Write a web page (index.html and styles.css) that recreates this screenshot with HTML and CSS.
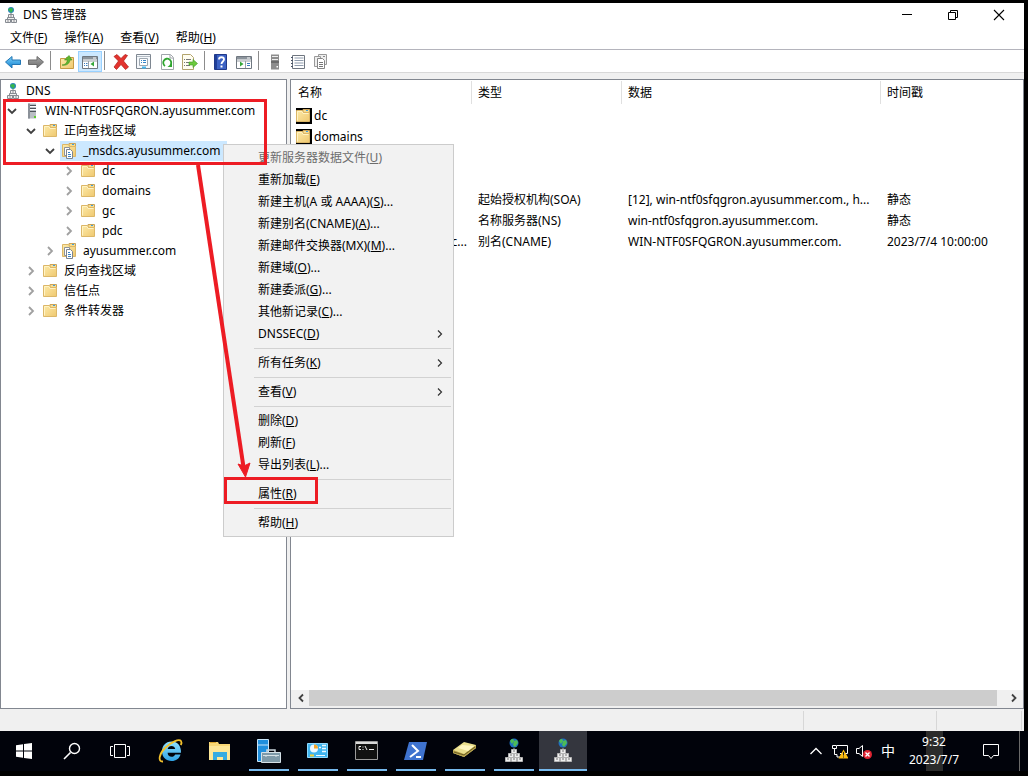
FILE: index.html
```html
<!DOCTYPE html>
<html lang="zh-CN">
<head>
<meta charset="utf-8">
<title>DNS 管理器</title>
<link rel="stylesheet" href="styles.css">
</head>
<body>
<svg class="sprite" aria-hidden="true">
  <defs>
    <linearGradient id="gold" x1="0" y1="0" x2="1" y2="1"><stop offset="0" stop-color="#fdeba9"/><stop offset="1" stop-color="#efc870"/></linearGradient>
    <linearGradient id="blue" x1="0" y1="0" x2="0" y2="1"><stop offset="0" stop-color="#7fd3fa"/><stop offset="1" stop-color="#0f7fd0"/></linearGradient>
    <linearGradient id="grey" x1="0" y1="0" x2="0" y2="1"><stop offset="0" stop-color="#a8a8a8"/><stop offset="1" stop-color="#6c6c6c"/></linearGradient>
    <linearGradient id="ie" x1="0" y1="0" x2="0" y2="1"><stop offset="0" stop-color="#8fe0ff"/><stop offset="1" stop-color="#2fa3e6"/></linearGradient>
  </defs>
  <symbol id="i-dns" viewBox="0 0 16 16">
    <circle cx="8" cy="3" r="3" fill="#2a86b8"/><path d="M6 1.500 9 1l1 2-2 3-1-2-2-1z" fill="#37b84a"/>
    <path d="M8 6v2M3.500 13v-1M12.500 13v-1" stroke="#777"/>
    <path d="M5.500 7.500h5v3h-5zM4.500 10.500h7v2h-7zM2.500 12.500h5v3h-5zM8.500 12.500h5v3h-5z" fill="#eee" stroke="#868b92"/>
    <path d="M7 9h2M4 14h2M10 14h2" stroke="#8d8d92"/>
  </symbol>
  <symbol id="i-folder" viewBox="1 0 16 16">
    <path d="M8 1.500h6.500v3H8z" fill="#f9dc8e" stroke="#cba45a"/><path d="M11 2.500h2" stroke="#3c9fe0"/>
    <path d="M1.500 2.500h6l1 2h6v9h-13z" fill="url(#gold)" stroke="#dcb768"/>
    <path d="M2.500 12.500V3.500h4.500l1 2h5.500" fill="none" stroke="#fff3c4"/>
  </symbol>
  <symbol id="i-zone" viewBox="1 0 16 16">
    <path d="M8 .500h6.500v3H8z" fill="#f9dc8e" stroke="#cba45a"/><path d="M11 1.500h2" stroke="#3c9fe0"/>
    <path d="M1.500 1.500h6l1 2h6v10h-13z" fill="url(#gold)" stroke="#dcb768"/>
    <path d="M3.500 4.500h5v8h-5z" fill="#fff" stroke="#8b929b"/>
    <path d="M5.500 6.500h4l2 2v7h-6z" fill="#fff" stroke="#7c848e"/>
    <path d="M7 9.500h2M7 11.500h3M7 13.500h3" stroke="#3a83c6"/>
  </symbol>
  <symbol id="i-server" viewBox="0 0 16 16">
    <path d="M4 .500h8v15H4z" fill="#b9bec4"/><path d="M4 .500h2v15H4z" fill="#8b9199"/>
    <path d="M6 2.500h6M6 5.500h6M6 8.500h6" stroke="#4e545b"/><path d="M6 3.500h6M6 6.500h6" stroke="#fff"/>
    <path d="M10 13h2v2h-2z" fill="#5acb2e"/>
  </symbol>
  <symbol id="i-open" viewBox="0 0 10 10"><path d="m1 3 4 4 4-4" fill="none" stroke="#404040" stroke-width="1.800"/></symbol>
  <symbol id="i-closed" viewBox="0 0 10 10"><path d="m3 1 4 4-4 4" fill="none" stroke="#a0a0a0" stroke-width="1.800"/></symbol>
  <symbol id="i-more" viewBox="0 0 10 10"><path d="m3 1.500 3.500 3.500L3 8.500" fill="none" stroke="#333" stroke-width="1.200"/></symbol>
  <symbol id="i-back" viewBox="0 0 16 16"><path d="M.500 8 7 2.500v3.500h8.500v4.500H7V14z" fill="url(#blue)" stroke="#2377b4"/></symbol>
  <symbol id="i-forward" viewBox="0 0 16 16"><path d="M15.500 8 9 2.500v3.500H.500v4.500H9V14z" fill="url(#grey)" stroke="#6b6b6b"/></symbol>
  <symbol id="i-up" viewBox="0 0 16 16">
    <path d="M1.500 4.500h5l1-1h7v11h-13z" fill="url(#gold)" stroke="#c79b45"/>
    <path d="M3 11c3 0 5-2 5.500-5H5.500L10 1.500 13 6h-2C10.500 9.500 7.500 12 3 11z" fill="#5fb62e" stroke="#3f8f1e" stroke-width=".600"/>
  </symbol>
  <symbol id="i-treepane" viewBox="0 0 16 16">
    <path d="M.500 2.500h15v12H.500z" fill="#fff" stroke="#6f7780"/><path d="M1 3h14v2.500H1z" fill="#8c949c"/><path d="M11 4h3" stroke="#fff"/><path d="M1 7h14M6.500 7v7" stroke="#9aa1a8"/>
    <path d="M2 9.500h1M2 11.500h1M4 9.500h1.500M4 11.500h1.500" stroke="#3a7dbd"/><path d="M12 7.500v5L8.500 10z" fill="#36a83a"/>
  </symbol>
  <symbol id="i-actionpane" viewBox="0 0 16 16">
    <path d="M.500 2.500h15v12H.500z" fill="#fff" stroke="#6f7780"/><path d="M1 3h14v2.500H1z" fill="#8c949c"/><path d="M11 4h3" stroke="#fff"/><path d="M1 7h14M9.500 7v7" stroke="#9aa1a8"/>
    <path d="M11 9.500h3M11 11.500h3" stroke="#3a7dbd"/><path d="M4 7.500v5L7.500 10z" fill="#36a83a"/>
  </symbol>
  <symbol id="i-delete" viewBox="0 0 16 16"><path d="m1 2.500 3-2 4 4 4-4 2.500 1-4 5.500 5 6-3 2.500-4.500-5-4.500 5L1 13l4.500-6z" fill="#e3342f" stroke="#b01813" stroke-width=".700"/></symbol>
  <symbol id="i-props" viewBox="0 0 16 16">
    <path d="M.500.500h14v14H.500z" fill="#f5f8fb" stroke="#7e8791"/><path d="M1 2.500h13" stroke="#b4bcc4"/><path d="M3.500 4.500h8v7h-8z" fill="#fff" stroke="#9da7b0"/>
    <path d="M5 6.500h1M5 8.500h1M7 6.500h3M7 8.500h3" stroke="#3584c7"/><path d="M6 12.500h4v2H6z" fill="#42b5ee"/>
  </symbol>
  <symbol id="i-refresh" viewBox="0 0 16 16">
    <path d="M2.500.500h9l3 3v12h-12z" fill="#fff" stroke="#a0a5aa"/><path d="M11 1v3h3" fill="none" stroke="#a0a5aa"/>
    <path d="M6 12a4 4 0 1 1 5.500-1" fill="none" stroke="#2fa52f" stroke-width="1.800"/><path d="M13 9v4H8.500z" fill="#2fa52f"/>
  </symbol>
  <symbol id="i-export" viewBox="0 0 16 16">
    <path d="M.500.500h8l3 3v12H.500z" fill="#fffdf0" stroke="#b3a46d"/><path d="M2 5.500h1M2 8.500h1M2 11.500h1M4 5.500h5M4 8.500h4M4 11.500h4" stroke="#777"/>
    <path d="M7 8h4V5.500L15.500 9.500 11 13.500V11H7z" fill="#6cc93c" stroke="#3f9a25" stroke-width=".600"/>
  </symbol>
  <symbol id="i-help" viewBox="0 0 16 16">
    <path d="M1.500.500h12v15h-12z" fill="#3c62c4" stroke="#20398a"/><path d="M2 1h2v14H2z" fill="#203f98"/>
    <path d="M6 5.500c0-3 5-3 5 0 0 2-2.500 2-2.500 4.500" fill="none" stroke="#fff" stroke-width="1.800"/><path d="M7.500 11.500h2v2h-2z" fill="#fff"/>
  </symbol>
  <symbol id="i-host" viewBox="0 0 16 16"><path d="M4 .500h8v15H4z" fill="#8d8d8d"/><path d="M5 2.500h6M5 5.500h6" stroke="#eee"/><path d="M4 7.500h8v1H4z" fill="#4b4b4b"/><path d="M9.500 12h1.500v1.500H9.500z" fill="#fff"/></symbol>
  <symbol id="i-list" viewBox="0 0 16 16"><path d="M2.500 1.500h12v13h-12z" fill="#fff" stroke="#6f7680"/><path d="M4.500 4h9M4.500 6.500h9M4.500 9h9M4.500 11.500h9" stroke="#8f9cad"/><path d="M1 3.500h2M1 6.500h2M1 9.500h2M1 12.500h2" stroke="#4b5668"/></symbol>
  <symbol id="i-copies" viewBox="0 0 16 16"><path d="M5.500.500h8v10h-8z" fill="#eee" stroke="#999"/><path d="M10 2.500h2" stroke="#888"/><path d="M1.500 2.500h6v10h-6z" fill="#eee" stroke="#999"/><path d="M4.500 4.500h5l2 2v8h-7z" fill="#fff" stroke="#858585"/><path d="M6 8.500h4M6 10.500h4M6 12.500h4" stroke="#777"/></symbol>
  <symbol id="i-dnsbig" viewBox="0 0 24 28">
    <circle cx="12" cy="6" r="4.500" fill="#1f6fc0"/><path d="M8 4c2-3 4-2 4 0l-2 3zM12 4l3-1 1 3-3 4-2-2z" fill="#4dbb57"/>
    <path d="M12 11v2" stroke="#aaa"/>
    <path d="M9.500 12.500h5v4h-5zM6.500 16.500h5v4h-5zM12.500 16.500h5v4h-5zM3.500 20.500h5v4h-5zM9.500 20.500h5v4h-5zM15.500 20.500h5v4h-5z" fill="#eee" stroke="#b4b4b4"/>
    <path d="M11 14h2M8 18h2M14 18h2M5 22h2M11 22h2M17 22h2" stroke="#777"/>
  </symbol>
</svg>

<div class="window">
  <header class="titlebar">
    <svg class="icon"><use href="#i-dns"/></svg>
    <h1 class="title">DNS 管理器</h1>
    <div class="caption">
      <button class="caption-btn" aria-label="最小化"><svg class="glyph" viewBox="0 0 12 12"><path d="M1 5.500h10" stroke="#000"/></svg></button>
      <button class="caption-btn" aria-label="还原"><svg class="glyph" viewBox="0 0 12 12"><path d="M1.500 3.500h7v7h-7zM3.500 3V1.500h7v7H9" fill="none" stroke="#000"/></svg></button>
      <button class="caption-btn" aria-label="关闭"><svg class="glyph" viewBox="0 0 12 12"><path d="m1 1 10 10M11 1 1 11" stroke="#000" stroke-width="1.100"/></svg></button>
    </div>
  </header>
  <nav class="menubar">
    <button class="menu-btn">文件(<u>F</u>)</button>
    <button class="menu-btn">操作(<u>A</u>)</button>
    <button class="menu-btn">查看(<u>V</u>)</button>
    <button class="menu-btn">帮助(<u>H</u>)</button>
  </nav>
  <div class="toolbar" role="toolbar">
    <button class="tool" aria-label="后退"><svg class="icon"><use href="#i-back"/></svg></button>
    <button class="tool" aria-label="前进"><svg class="icon"><use href="#i-forward"/></svg></button>
    <span class="tool-sep"></span>
    <button class="tool" aria-label="向上"><svg class="icon"><use href="#i-up"/></svg></button>
    <button class="tool tool-on" aria-label="显示控制台树"><svg class="icon"><use href="#i-treepane"/></svg></button>
    <span class="tool-sep"></span>
    <button class="tool" aria-label="删除"><svg class="icon"><use href="#i-delete"/></svg></button>
    <button class="tool" aria-label="属性"><svg class="icon"><use href="#i-props"/></svg></button>
    <button class="tool" aria-label="刷新"><svg class="icon"><use href="#i-refresh"/></svg></button>
    <button class="tool" aria-label="导出列表"><svg class="icon"><use href="#i-export"/></svg></button>
    <span class="tool-sep"></span>
    <button class="tool" aria-label="帮助"><svg class="icon"><use href="#i-help"/></svg></button>
    <button class="tool" aria-label="显示操作窗格"><svg class="icon"><use href="#i-actionpane"/></svg></button>
    <span class="tool-sep"></span>
    <button class="tool" aria-label="新建服务器"><svg class="icon"><use href="#i-host"/></svg></button>
    <button class="tool" aria-label="新建记录"><svg class="icon"><use href="#i-list"/></svg></button>
    <button class="tool" aria-label="新建区域"><svg class="icon"><use href="#i-copies"/></svg></button>
  </div>

  <main class="panes">
    <section class="pane tree-pane">
      <div class="row root"><button class="node"><svg class="icon"><use href="#i-dns"/></svg>DNS</button></div>
      <ul class="tree">
        <li>
          <div class="row"><svg class="chev"><use href="#i-open"/></svg><button class="node"><svg class="icon"><use href="#i-server"/></svg>WIN-NTF0SFQGRON.ayusummer.com</button></div>
          <ul class="tree sub">
            <li>
              <div class="row"><svg class="chev"><use href="#i-open"/></svg><button class="node"><svg class="icon"><use href="#i-folder"/></svg>正向查找区域</button></div>
              <ul class="tree sub">
                <li>
                  <div class="row"><svg class="chev"><use href="#i-open"/></svg><button class="node selected"><svg class="icon"><use href="#i-zone"/></svg>_msdcs.ayusummer.com</button></div>
                  <ul class="tree sub">
                    <li class="row"><svg class="chev"><use href="#i-closed"/></svg><button class="node"><svg class="icon"><use href="#i-folder"/></svg>dc</button></li>
                    <li class="row"><svg class="chev"><use href="#i-closed"/></svg><button class="node"><svg class="icon"><use href="#i-folder"/></svg>domains</button></li>
                    <li class="row"><svg class="chev"><use href="#i-closed"/></svg><button class="node"><svg class="icon"><use href="#i-folder"/></svg>gc</button></li>
                    <li class="row"><svg class="chev"><use href="#i-closed"/></svg><button class="node"><svg class="icon"><use href="#i-folder"/></svg>pdc</button></li>
                  </ul>
                </li>
                <li class="row"><svg class="chev"><use href="#i-closed"/></svg><button class="node"><svg class="icon"><use href="#i-zone"/></svg>ayusummer.com</button></li>
              </ul>
            </li>
            <li class="row"><svg class="chev"><use href="#i-closed"/></svg><button class="node"><svg class="icon"><use href="#i-folder"/></svg>反向查找区域</button></li>
            <li class="row"><svg class="chev"><use href="#i-closed"/></svg><button class="node"><svg class="icon"><use href="#i-folder"/></svg>信任点</button></li>
            <li class="row"><svg class="chev"><use href="#i-closed"/></svg><button class="node"><svg class="icon"><use href="#i-folder"/></svg>条件转发器</button></li>
          </ul>
        </li>
      </ul>
    </section>

    <section class="pane list-pane">
      <table class="records">
        <colgroup><col class="c-name"><col class="c-type"><col class="c-data"><col></colgroup>
        <thead><tr><th>名称</th><th>类型</th><th>数据</th><th>时间戳</th></tr></thead>
        <tbody>
          <tr><td><span class="name"><svg class="icon boxed"><use href="#i-folder"/></svg>dc</span></td><td></td><td></td><td></td></tr>
          <tr><td><span class="name"><svg class="icon boxed"><use href="#i-folder"/></svg>domains</span></td><td></td><td></td><td></td></tr>
          <tr><td></td><td></td><td></td><td></td></tr>
          <tr><td></td><td></td><td></td><td></td></tr>
          <tr><td></td><td>起始授权机构(SOA)</td><td>[12], win-ntf0sfqgron.ayusummer.com., h...</td><td>静态</td></tr>
          <tr><td></td><td>名称服务器(NS)</td><td>win-ntf0sfqgron.ayusummer.com.</td><td>静态</td></tr>
          <tr><td class="tail">c...</td><td>别名(CNAME)</td><td>WIN-NTF0SFQGRON.ayusummer.com.</td><td>2023/7/4 10:00:00</td></tr>
        </tbody>
      </table>
      <div class="scrollbar">
        <button class="scroll-btn" aria-label="向左滚动"><svg class="chev" viewBox="0 0 10 10"><path d="M7 1.500 3.500 5 7 8.500" fill="none" stroke="#404040" stroke-width="1.800"/></svg></button>
        <div class="thumb"></div>
        <button class="scroll-btn wide" aria-label="向右滚动"><svg class="chev" viewBox="0 0 10 10"><path d="M3 1.500 6.500 5 3 8.500" fill="none" stroke="#404040" stroke-width="1.800"/></svg></button>
      </div>
    </section>
  </main>
  <footer class="status"><span class="status-cell"></span><span class="status-cell narrow"></span></footer>
</div>

<div class="context" role="menu">
  <button class="item" role="menuitem" disabled><span>更新服务器数据文件(<u>U</u>)</span></button>
  <button class="item" role="menuitem"><span>重新加载(<u>E</u>)</span></button>
  <button class="item" role="menuitem"><span>新建主机(A 或 AAAA)(<u>S</u>)...</span></button>
  <button class="item" role="menuitem"><span>新建别名(CNAME)(<u>A</u>)...</span></button>
  <button class="item" role="menuitem"><span>新建邮件交换器(MX)(<u>M</u>)...</span></button>
  <button class="item" role="menuitem"><span>新建域(<u>O</u>)...</span></button>
  <button class="item" role="menuitem"><span>新建委派(<u>G</u>)...</span></button>
  <button class="item" role="menuitem"><span>其他新记录(<u>C</u>)...</span></button>
  <button class="item" role="menuitem"><span>DNSSEC(<u>D</u>)</span><svg class="more"><use href="#i-more"/></svg></button>
  <hr class="rule">
  <button class="item" role="menuitem"><span>所有任务(<u>K</u>)</span><svg class="more"><use href="#i-more"/></svg></button>
  <hr class="rule">
  <button class="item" role="menuitem"><span>查看(<u>V</u>)</span><svg class="more"><use href="#i-more"/></svg></button>
  <hr class="rule">
  <button class="item" role="menuitem"><span>删除(<u>D</u>)</span></button>
  <button class="item" role="menuitem"><span>刷新(<u>F</u>)</span></button>
  <button class="item" role="menuitem"><span>导出列表(<u>L</u>)...</span></button>
  <hr class="rule">
  <button class="item" role="menuitem"><span>属性(<u>R</u>)</span></button>
  <hr class="rule">
  <button class="item" role="menuitem"><span>帮助(<u>H</u>)</span></button>
</div>

<svg class="marks" width="330" height="520" viewBox="0 0 330 520" aria-hidden="true">
  <path d="M4.500 100.500h261v63h-261zM225.500 478.500h91v24h-91z" fill="none" stroke="#ed1c24" stroke-width="3"/>
  <path d="m198 165 45.500 302" stroke="#ed1c24" stroke-width="4"/>
  <path d="m238 464 6 2 6-3-4.500 14z" fill="#ed1c24" stroke="#ed1c24"/>
</svg>

<div class="taskbar">
  <button class="task" aria-label="开始"><svg class="pic" viewBox="0 0 28 28"><path d="m6 8.300 7-1v6.200H6zM14 7.100l8-1.100v7.500h-8zM6 14.500h7v6.200l-7-1zM14 14.500h8V22l-8-1.100z" fill="#fff"/></svg></button>
  <button class="task" aria-label="搜索"><svg class="pic" viewBox="0 0 28 28"><path d="m6 22 6.500-6.500" stroke="#fff" stroke-width="1.600"/><circle cx="16.500" cy="11.500" r="5" fill="none" stroke="#fff" stroke-width="1.400"/></svg></button>
  <button class="task" aria-label="任务视图"><svg class="pic" viewBox="0 0 28 28"><path d="M8.500 7.500h11v13h-11zM7 9.500H4.500v9H7M21 9.500h2.500v9H21" fill="none" stroke="#fff"/></svg></button>
  <div class="apps">
    <button class="task" aria-label="Internet Explorer"><svg class="pic" viewBox="0 0 28 28"><path d="M14.500 4.500c-6 0-9.500 4.500-9.500 9.700 0 5.800 4 9.800 9.700 9.800 4.300 0 7.600-2.200 8.800-6.500h-5.300c-.8 1.600-2 2.300-3.500 2.300-2.400 0-4-1.600-4.100-4.100H24c.3-6.600-3.300-11.200-9.500-11.200zm-3.800 7.600c.4-2 1.800-3.200 3.800-3.200s3.400 1.200 3.700 3.200z" fill="url(#ie)"/><path d="M6 24.500C.500 25 2 17 8 11S22 1.500 24 4c.8 1 .5 2.500-.200 4" fill="none" stroke="#f3c12c" stroke-width="1.800"/></svg></button>
    <button class="task" aria-label="文件资源管理器"><svg class="pic" viewBox="0 0 28 28"><path d="M3 5h9l1 2h11v16H3z" fill="#f8d775"/><path d="M3 9h21v14H3z" fill="#fde697"/><path d="M4 5h6v1H4z" fill="#dca52e"/><path d="M7 23v-8h14v8h-4v-3h-6v3z" fill="#35abe2"/></svg></button>
    <button class="task running" aria-label="服务器管理器"><svg class="pic" viewBox="0 0 28 28"><path d="M2.500 2.500h11v22h-11z" fill="#1f8fdd" stroke="#c8e4f8"/><path d="M3 8h10" stroke="#c8e4f8"/><path d="M12 15v-2h8v2" fill="none" stroke="#ccd8de" stroke-width="1.500"/><path d="M6.500 15.500h19v10h-19z" fill="#7e9aa9" stroke="#d5e1e7"/><path d="M8 18.500h16M11 18v2M21 18v2" stroke="#d5e1e7"/></svg></button>
    <button class="task running" aria-label="控制面板"><svg class="pic" viewBox="0 0 28 28"><path d="M3.500 6.500h20v14h-20z" fill="#3fb4ee" stroke="#8edaff"/><circle cx="10" cy="11.500" r="4" fill="#eef9ff"/><path d="M10 11.500v-4a4 4 0 0 1 4 4z" fill="#f4a62a"/><path d="M15 10.500h2M18 8.500h4M18 11.500h4M18 14.500h4" stroke="#eef9ff" stroke-width="1.500"/><path d="M6 18.500h4" stroke="#f3d13a" stroke-width="2"/><path d="M12 18.500h9" stroke="#eef9ff"/></svg></button>
    <button class="task running" aria-label="命令提示符"><svg class="pic" viewBox="0 0 28 28"><path d="M2.500 4.500h22v18h-22z" fill="#111" stroke="#9b9b9b"/><path d="M3 5h21v2H3z" fill="#d9d9d9"/><path d="M8 9.500H6v3h2M10 9.500v1M10 12v1M12 9l2 4M16 12.500h5" fill="none" stroke="#eee"/></svg></button>
    <button class="task running" aria-label="PowerShell"><svg class="pic" viewBox="0 0 28 28"><path d="M7 5h18l-4 18H2z" fill="#3f73cf"/><path d="m10 8 6 6-8 6" fill="none" stroke="#fff" stroke-width="2"/><path d="M14 20h5" stroke="#fff" stroke-width="2"/></svg></button>
    <button class="task running" aria-label="工具"><svg class="pic" viewBox="0 0 28 28"><path d="m2 13 11-8 12 3v3l-12 9-11-4z" fill="#eadf8d"/><path d="m2 13 11 4 12-9v3l-12 9-11-4z" fill="#b5a049"/><path d="m7 11 4-3 12 1-6 5z" fill="#fff7c0"/><path d="m3 15 10 3 11-8" fill="none" stroke="#6b5e25"/></svg></button>
    <button class="task running" aria-label="DNS"><svg class="pic"><use href="#i-dnsbig"/></svg></button>
    <button class="task running active" aria-label="DNS 管理器"><svg class="pic"><use href="#i-dnsbig"/></svg></button>
  </div>
  <div class="tray">
    <button class="tray-btn" aria-label="显示隐藏的图标"><svg class="icon" viewBox="0 0 16 16"><path d="m2.500 11 5.500-5.500 5.500 5.500" fill="none" stroke="#fff" stroke-width="1.300"/></svg></button>
    <button class="tray-btn" aria-label="网络"><svg class="icon" viewBox="0 0 16 16"><path d="M5 2.500h10.500v8H8M.500 2.500h4v3h-4zM2.500 6v5.500H5V14h4" fill="none" stroke="#fff"/><path d="m11.500 6.500 5 9h-10z" fill="#fdbe12"/><path d="M11.500 9v3.500M11.500 13.500v1" stroke="#222"/></svg></button>
    <button class="tray-btn" aria-label="音量"><svg class="icon" viewBox="0 0 16 16"><path d="M.500 5.500H3l3.500-3v11L3 10.500H.500z" fill="none" stroke="#fff"/><circle cx="11.500" cy="11.500" r="4.500" fill="#e02432"/><path d="m9.500 9.500 4 4M13.500 9.500l-4 4" stroke="#fff" stroke-width="1.300"/></svg></button>
    <button class="tray-btn ime">中</button>
    <button class="clock"><span>9:32</span><span>2023/7/7</span></button>
    <button class="note" aria-label="操作中心"><svg class="icon" viewBox="0 0 16 16"><path d="M.500 1.500h15v11h-5L8 15.500l-2.500-3h-5z" fill="none" stroke="#fff"/></svg></button>
  </div>
</div>
</body>
</html>
```
FILE: styles.css
```css
* { box-sizing: border-box; }

body {
  margin: 0;
  min-height: 100vh;
  display: flex;
  flex-direction: column;
  background: #000;
  color: #000;
  font: 12px/16px "Noto Sans", "Noto Sans CJK SC", sans-serif;
}

button {
  margin: 0;
  padding: 0;
  border: 0;
  background: none;
  color: inherit;
  font: inherit;
  white-space: nowrap;
}

.sprite { position: absolute; width: 0; height: 0; }
.icon { width: 16px; height: 16px; flex: none; }

.window {
  flex: 1;
  display: flex;
  flex-direction: column;
  margin: 3px 4px 0 0;
  background: #fff;
}

.titlebar {
  display: flex;
  align-items: center;
  gap: 4px;
  height: 23px;
  padding-left: 3px;
}
.title { margin: 0; font-size: 12px; font-weight: 400; flex: 1; }
.caption { display: flex; }
.caption-btn { width: 46px; height: 22px; display: grid; place-items: center; }
.caption-btn:last-child { margin-right: 2px; }
.glyph { width: 12px; height: 12px; }

.menubar {
  display: flex;
  gap: 1px;
  height: 24px;
  padding-left: 2px;
  border-bottom: 1px solid #b4b4bc;
}
.menu-btn { padding: 1px 8px 0; }

.toolbar {
  display: flex;
  align-items: flex-end;
  height: 23px;
  padding-left: 1px;
  border-bottom: 1px solid #d8d8d8;
}
.tool { width: 23px; height: 21px; display: grid; place-items: center; }
.tool-on { width: 24px; background: #cce8ff; box-shadow: inset 0 0 0 1px #99d1ff; }
.tool-sep { width: 8px; height: 21px; padding-left: 3px; }
.tool-on + .tool-sep { width: 7px; padding-left: 2px; }
.tool-sep::before { content: ""; display: block; width: 1px; height: 19px; background: #8c8c8c; }

.panes {
  flex: 1;
  display: flex;
  gap: 3px;
  padding-top: 6px;
  background: #f0f0f0;
}
.pane { background: #fff; border: 1px solid #828790; }
.tree-pane { width: 287px; flex: none; padding-top: 1px; }

.tree { list-style: none; margin: 0; padding: 0; }
.sub { padding-left: 19px; }
.row { display: flex; align-items: center; gap: 2px; height: 20px; padding-left: 6px; }
.root { padding-left: 2px; }
.chev { width: 10px; height: 10px; flex: none; }
.tree .chev { margin-right: 3px; }
.node { display: flex; align-items: center; gap: 5px; height: 20px; padding: 0 4px 0 2px; }
.selected { padding-right: 6px; background: #cce8ff; }

.list-pane { flex: 1; min-width: 0; display: flex; flex-direction: column; }
.records { width: 100%; table-layout: fixed; border-collapse: collapse; }
.c-name { width: 181px; }
.c-type { width: 150px; }
.c-data { width: 259px; }
.records th {
  height: 25px;
  padding: 0 6px;
  text-align: left;
  font-weight: 400;
  background: linear-gradient(#e0e0e0, #e0e0e0) right center / 1px 23px no-repeat;
}
.records th:first-child { padding-left: 7px; }
.records th:last-child { background: none; }
.records td { height: 21px; padding: 0 6px; white-space: nowrap; }
.records td:first-child { padding: 0 5px; }
.records .tail { text-align: right; }
.name { display: flex; align-items: center; gap: 2px; }
.boxed { background: #000; }

.scrollbar { display: flex; height: 18px; margin-top: auto; padding: 0 1px 2px; background: #f0f0f0; }
.scroll-btn { width: 17px; display: grid; place-items: center; }
.wide { width: 25px; padding-left: 8px; }
.thumb { flex: 1; background: #cdcdcd; }

.status {
  display: flex;
  justify-content: flex-end;
  height: 22px;
  padding: 2px 2px 1px 0;
  background: #f0f0f0;
}
.status-cell { width: 133px; border-left: 1px solid #d7d7d7; }
.narrow { width: 86px; border-right: 1px solid #d7d7d7; }

.context {
  position: absolute;
  left: 223px;
  top: 144px;
  width: 231px;
  padding: 2px;
  background: #f2f2f2;
  border: 1px solid #ccc;
}
.item {
  display: flex;
  align-items: center;
  justify-content: space-between;
  width: 100%;
  height: 22px;
  padding: 0 6px 0 32px;
}
.item:disabled { color: #6d6d6d; }
.more { width: 10px; height: 10px; }
.rule { height: 1px; margin: 3px 0 3px 28px; border: 0; background: #d2d2d2; }

.marks { position: absolute; left: 0; top: 0; pointer-events: none; }

.taskbar {
  display: flex;
  height: 45px;
  padding-bottom: 5px;
  background: linear-gradient(#01030b, #01030b) 0 0 / 100% 40px no-repeat;
  color: #fff;
}
.task { width: 48px; height: 40px; display: grid; place-items: center; }
.apps { display: flex; gap: 1px; margin-left: 3px; }
.pic { width: 28px; height: 28px; }
.running { background: linear-gradient(#76b9ed, #76b9ed) center bottom / 40px 2px no-repeat; }
.active { background: linear-gradient(#76b9ed, #76b9ed) center bottom / 48px 2px no-repeat #34363e; }

.tray { display: flex; margin-left: auto; margin-right: 8px; border-right: 1px solid #6a6a6a; }
.tray-btn { width: 24px; display: grid; place-items: center; }
.ime { font-size: 14px; }
.clock {
  width: 68px;
  display: flex;
  flex-direction: column;
  align-items: center;
  justify-content: center;
  gap: 2px;
  background: linear-gradient(#2b2b2b, #2b2b2b) center / 17px 40px no-repeat;
}
.note { width: 51px; padding-right: 5px; display: grid; place-items: center; }
```
